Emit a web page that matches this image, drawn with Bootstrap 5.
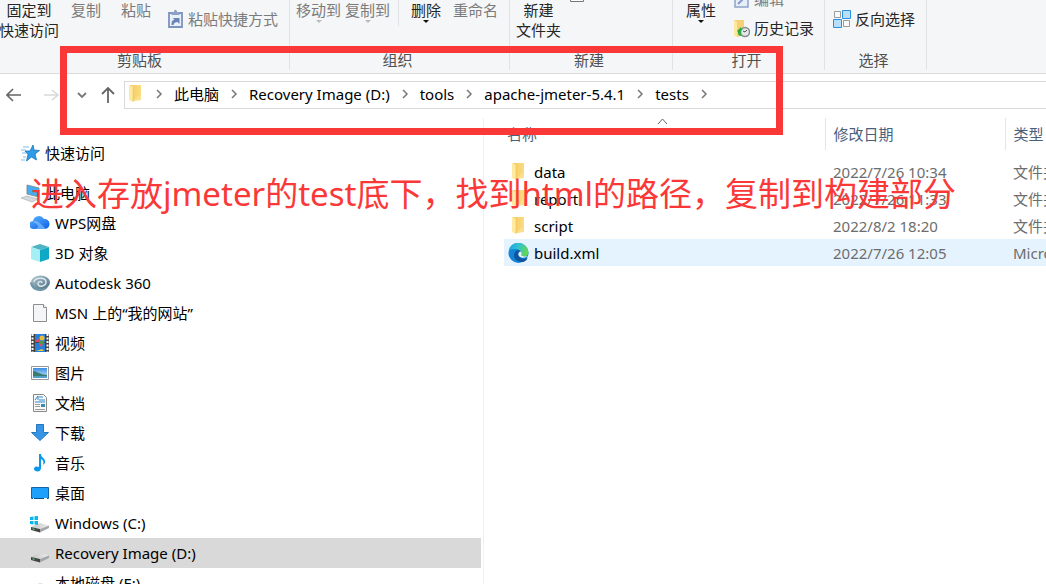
<!DOCTYPE html>
<html lang="zh-CN">
<head>
<meta charset="utf-8">
<meta name="viewport" content="width=device-width, initial-scale=1">
<title>tests</title>
<link href="https://cdn.jsdelivr.net/npm/bootstrap@5.3.0/dist/css/bootstrap.min.css" rel="stylesheet">
<style>
body{font:15px/20px "Noto Sans","Noto Sans CJK SC",sans-serif;color:#000;background:#fff}
.explorer{height:100vh}
a{color:inherit;text-decoration:none}
.ribbon{background:#f5f6f7;border-bottom:1px solid #dadbdc;color:#262626;height:74px}
.ribbon-group{border-right:1px solid #e1e2e3;height:70px}
.tools{height:50px}
.caption-text{color:#505050}
.tool{background:none;border:0;padding:0;color:inherit;line-height:20px;white-space:nowrap}
.tool:disabled{color:#7b7b7b}
.tool svg{display:block}
.g-clip{width:290px;padding-right:10px}
.g-org{width:220px;padding-right:4px}
.g-new{width:163px;padding-right:4px}
.g-open{width:152px;padding-right:4px}
.g-sel{width:102px;padding-right:4px}
.clip-tools{gap:20px}
.clip-tools .pin{width:60px;margin-right:-8px;margin-left:-1px}
.paste-link{margin-top:9px;margin-left:-4px}
.org-tools{padding-left:6px;gap:4px}
.new-tools{padding-left:6px;gap:8px}
.divider{width:1px;height:26px;background:#e1e2e3}
.open-tools{padding-left:13px;gap:18px}
.stack{margin-top:-11px;gap:9px}
.stack-up{margin-top:-21px;gap:10px}
.addressbar{height:28px;margin:7px 0 9px}
.nav-tools{width:124px;padding-left:6px;padding-right:9px}
.crumbs{border:1px solid #d9d9d9;border-right:0;gap:11px;padding:0 0 2px 3px}
.sidebar{width:484px;flex:none;border-right:1px solid #f0f0f0;padding-top:20px}
.sidebar a{height:30px;flex:none;padding-left:30px;gap:5px;margin-right:2px}
.sidebar a.root{padding-left:20px}
.sidebar a.quick{margin-bottom:10px}
.sidebar a.active{background:#d9d9d9}
.files{table-layout:fixed;width:721px;margin-left:20px;border-collapse:collapse;flex:none}
.files th{height:32px;font-weight:400;color:#4c607a;border-right:1px solid #e5e5e5;padding:0 8px}
.files th:first-child{padding-left:3px}
.files tbody::before{content:"";display:block;height:8px}
.files td{height:27px;padding:0 8px;color:#6d6d6d;white-space:nowrap}
.files td:first-child{padding:0 4px}
.files td a{color:#000;gap:5px}
.files tr.hover td{background:#e5f3ff}
.sorted{left:153px;top:0}
.mark-box{left:60px;top:46px;width:723px;height:89px;border:7px solid #fb3838;pointer-events:none}
.mark-text{left:31px;top:170px;font-size:33px;line-height:48px;color:#fb3838;white-space:nowrap;pointer-events:none}
</style>
</head>
<body>
<svg width="0" height="0" class="position-absolute" aria-hidden="true">
<defs>
<linearGradient id="fold" x2="1"><stop stop-color="#f3cb64"/><stop offset="1" stop-color="#fbdc80"/></linearGradient>
<linearGradient id="edgeA" x1="0" y1="0" x2="1" y2=".3"><stop stop-color="#1b9de2"/><stop offset=".5" stop-color="#2fc3d2"/><stop offset="1" stop-color="#63d45a"/></linearGradient>
<linearGradient id="cloud" x2=".8" y2="1"><stop stop-color="#5cb5ff"/><stop offset="1" stop-color="#1264e8"/></linearGradient>
<linearGradient id="sky" x2="0" y2="1"><stop stop-color="#3b8be0"/><stop offset="1" stop-color="#d4edfb"/></linearGradient>
<linearGradient id="disk" x2="1"><stop stop-color="#c4c4c4"/><stop offset="1" stop-color="#ececec"/></linearGradient>
<linearGradient id="swirl" x2="1" y2="1"><stop stop-color="#b5cad5"/><stop offset="1" stop-color="#496c80"/></linearGradient>
</defs>
<symbol id="folder" viewBox="0 0 20 20"><path d="M5 1h11v15l-8 1z" fill="url(#fold)"/><path d="M13 12l3-1v5H9z" fill="#fae08c"/><path d="M4 1l4 2v15l-4-2z" fill="#ffeaa2"/><path d="M8 3v15" stroke="#edc35d" stroke-width=".6"/></symbol>
<symbol id="chev" viewBox="0 0 8 10"><path d="M2 1l4 4-4 4" fill="none" stroke="#777" stroke-width="1.5"/></symbol>
<symbol id="diskbox" viewBox="0 0 20 20"><path d="M1 14l9-4 9 2.500-9 3.500z" fill="url(#disk)"/><path d="M1 14l9 2v3.500L1 17z" fill="#424645"/><path d="M10 16l9-3.500V15l-9 4.500z" fill="#a4a7a7"/><path d="M2.500 15.800l2 .6" stroke="#60e38a"/></symbol>
</svg>

<div class="explorer d-flex flex-column overflow-hidden position-relative">
<header class="ribbon d-flex flex-shrink-0 overflow-hidden">
 <section class="ribbon-group flex-shrink-0 g-clip">
  <div class="tools d-flex align-items-start clip-tools">
   <button class="tool pin">固定到<br>快速访问</button>
   <button class="tool" disabled>复制</button>
   <button class="tool" disabled>粘贴</button>
   <button class="tool paste-link d-flex gap-1" disabled><svg width="17" height="20" viewBox="0 0 16 20"><path d="M1.500 4h13v14h-13z" fill="#e9f0fa" stroke="#7d92bd" stroke-width="1.800"/><path d="M4 3h2.500c0-3 3-3 3 0H12v3H4z" fill="#8da1c8"/><path d="M4 16c0-4 1-5 3-5L5.500 9H12v6l-2-2c-2 0-4 1-4 3z" fill="#6883b6"/></svg>粘贴快捷方式</button>
  </div>
  <div class="caption-text text-center">剪贴板</div>
 </section>
 <section class="ribbon-group flex-shrink-0 g-org">
  <div class="tools org-tools d-flex align-items-start">
   <button class="tool" disabled>移动到<svg class="mx-auto" width="8" height="4"><path d="M1 0h6L4 3z" fill="#bbb"/></svg></button>
   <button class="tool" disabled>复制到<svg class="mx-auto" width="8" height="4"><path d="M1 0h6L4 3z" fill="#bbb"/></svg></button>
   <span class="divider ms-1"></span>
   <button class="tool ms-2">删除<svg class="mx-auto" width="8" height="4"><path d="M1 0h6L4 3z" fill="#111"/></svg></button>
   <button class="tool ms-2" disabled>重命名</button>
  </div>
  <div class="caption-text text-center">组织</div>
 </section>
 <section class="ribbon-group flex-shrink-0 g-new">
  <div class="tools new-tools d-flex align-items-start">
   <button class="tool">新建<br>文件夹</button>
   <svg width="18" height="3"><path d="M1.500-3v4.500h13V-3" fill="#fff" stroke="#777"/></svg>
  </div>
  <div class="caption-text text-center">新建</div>
 </section>
 <section class="ribbon-group flex-shrink-0 g-open">
  <div class="tools open-tools d-flex align-items-start">
   <button class="tool">属性<svg class="mx-auto" width="8" height="4"><path d="M1 0h6L4 3z" fill="#111"/></svg></button>
   <div class="stack d-flex flex-column align-items-start">
    <button class="tool d-flex gap-1" disabled><svg width="16" height="20"><path d="M1 5h13v13H1z" fill="#e7eefa" stroke="#8fa3cb" stroke-width="1.500"/><path d="M4 15l8-8" stroke="#879dc8" stroke-width="2"/></svg>编辑</button>
    <button class="tool d-flex gap-1"><svg width="16" height="20" viewBox="0 0 16 20"><path d="M0 2h10v12l-6 5-4-2z" fill="#f6d173"/><path d="M0 2l3 2v15l-3-2z" fill="#ffe9a1"/><circle cx="11" cy="14" r="4.500" fill="#e4e7e8" stroke="#858b8e" stroke-width="1.500"/><path d="M11 14l2-2M11 14l-2-1" stroke="#555"/><path d="M3 13l4-4v2h2c-3 2-3 4-1 7-3 0-4-1-4-4z" fill="#26ad3b"/></svg>历史记录</button>
   </div>
  </div>
  <div class="caption-text text-center">打开</div>
 </section>
 <section class="ribbon-group flex-shrink-0 g-sel">
  <div class="tools d-flex align-items-start ps-2">
   <div class="stack-up d-flex flex-column align-items-start">
    <button class="tool d-flex gap-1" aria-label="全部取消"><svg width="18" height="20"><path d="M2 14h6v7H2zM11 14h6v7h-6z" fill="#fff" stroke="#a0a0a0"/></svg></button>
    <button class="tool d-flex gap-1"><svg width="18" height="20"><path d="M1.500 2.500h6v6h-6zM10.500 11.500h6v6h-6z" fill="#fafafa" stroke="#9b9b9b"/><path d="M9.500 1.500h8v8h-8zM.5 10.500h8v8h-8z" fill="#b8dffa" stroke="#2890df"/></svg>反向选择</button>
   </div>
  </div>
  <div class="caption-text text-center">选择</div>
 </section>
</header>

<div class="addressbar d-flex flex-shrink-0">
 <div class="nav-tools d-flex align-items-center justify-content-between">
  <button class="tool" aria-label="后退"><svg width="16" height="14"><path d="M15 7H1M7 1L1 7l6 6" fill="none" stroke="#666" stroke-width="1.600"/></svg></button>
  <button class="tool ms-2" disabled aria-label="前进"><svg width="16" height="14"><path d="M0 7h14M8 2l6 5-6 5" fill="none" stroke="#d9d9d9" stroke-width="1.600"/></svg></button>
  <button class="tool ms-1" aria-label="最近的位置"><svg width="10" height="8"><path d="M1 2l4 4 4-4" fill="none" stroke="#777" stroke-width="1.800"/></svg></button>
  <button class="tool" aria-label="上移"><svg width="14" height="16"><path d="M7 16V1M1 7l6-6 6 6" fill="none" stroke="#666" stroke-width="1.800"/></svg></button>
 </div>
 <nav class="crumbs d-flex flex-grow-1 align-items-center text-nowrap" aria-label="路径">
  <svg width="16" height="20" viewBox="3 0 16 20"><use href="#folder" width="20" height="20"/></svg>
  <svg width="8" height="10"><use href="#chev"/></svg><a href="#">此电脑</a>
  <svg width="8" height="10"><use href="#chev"/></svg><a href="#">Recovery Image (D:)</a>
  <svg width="8" height="10"><use href="#chev"/></svg><a href="#">tools</a>
  <svg width="8" height="10"><use href="#chev"/></svg><a href="#">apache-jmeter-5.4.1</a>
  <svg width="8" height="10"><use href="#chev"/></svg><a href="#">tests</a>
  <svg width="8" height="10"><use href="#chev"/></svg>
 </nav>
</div>

<main class="d-flex flex-grow-1 overflow-hidden">
 <nav class="sidebar d-flex flex-column overflow-hidden" aria-label="导航窗格">
  <a href="#" class="root quick d-flex align-items-center"><svg width="20" height="20"><path d="M13 2l1 5 5.500.5L15 11l1.500 6-5-3-5 4L8 11.500 5 8h5z" fill="#2e9be8" stroke="#1673b8" stroke-width=".8"/><path d="M3 4h6M1 7h5M2 10h4M3 14h3M1 17h4" stroke="#79bde9"/></svg>快速访问</a>
  <a href="#" class="root d-flex align-items-center"><svg width="20" height="20"><path d="M7 2l12 3v9L7 11z" fill="#45aef2" stroke="#7f909c"/><path d="M1 15l6-2 11 3-6 3z" fill="#d4d9dd" stroke="#a3abb1" stroke-width=".6"/></svg>此电脑</a>
  <a href="#" class="d-flex align-items-center"><svg width="20" height="20"><path d="M4 16a4 4 0 01-1-8 6 6 0 0111-2 5 5 0 011 10z" fill="url(#cloud)"/><path d="M2 9c5-3 8 1 14 7H5c5-1 4-5-3-7z" fill="#86c5ff" opacity=".65"/></svg>WPS网盘</a>
  <a href="#" class="d-flex align-items-center"><svg width="20" height="20"><path d="M1 4l9-3 9 3-9 3z" fill="#4fb3c4"/><path d="M1 4l9 3v12l-9-3z" fill="#a4eff3"/><path d="M19 4l-9 3v12l9-3z" fill="#10a9c5"/></svg>3D 对象</a>
  <a href="#" class="d-flex align-items-center"><svg width="20" height="20"><ellipse cx="10.500" cy="9.500" rx="9.500" ry="7" fill="url(#swirl)"/><path d="M0 9c0 5 4 9 10 9 4 0 7-2 8-4-6 3-14 2-16-4z" fill="#6f95a8"/><path d="M4 9c1-5 12-5 12 0 0 4-7 6-8 2 0-3 4-3 4-1" fill="none" stroke="#dce7ec" stroke-width="1.500"/></svg>Autodesk 360</a>
  <a href="#" class="d-flex align-items-center"><svg width="20" height="20"><path d="M3.500 1.500h10l3 3v14h-13z" fill="#f4f5f6" stroke="#8e8e8e"/><path d="M13.500 1.500v3h3" fill="#fff" stroke="#8e8e8e"/></svg>MSN 上的“我的网站”</a>
  <a href="#" class="d-flex align-items-center"><svg width="20" height="20"><path d="M1 1h18v18H1z" fill="#444"/><path d="M5 1h10v8H5zM5 10h10v9H5z" fill="#247fdd"/><path d="M2.500 1v18M17.500 1v18" stroke="#fff" stroke-width="2" stroke-dasharray="2 1.500"/><path d="M5 9l3-4 2 4z" fill="#e44b61"/><circle cx="12" cy="5" r="2.500" fill="#e8be32"/><path d="M9 8h5v2l-2 2-3-1z" fill="#4c9b40"/><circle cx="11" cy="12" r="1.500" fill="#e44b61"/><path d="M6 18h8l-2-2z" fill="#efc73b"/></svg>视频</a>
  <a href="#" class="d-flex align-items-center"><svg width="20" height="20"><path d="M1.500 3.500h17v13h-17z" fill="#fff" stroke="#999"/><path d="M3 5h14v10H3z" fill="url(#sky)"/><path d="M3 8c4 0 5 3 14 4v3H3z" fill="#397d70"/><path d="M3 13h14v2H3z" fill="#539ec7"/></svg>图片</a>
  <a href="#" class="d-flex align-items-center"><svg width="20" height="20"><path d="M3.500 1.500h10l3 3v14h-13z" fill="#f9f9f9" stroke="#898989"/><path d="M5 7l3-4v4M9 4h4M9 7h6M5 9h10" fill="none" stroke="#2a87cb"/><path d="M5 11.500h5M5 13.500h5M5 16.500h10" stroke="#9a9a9a"/><path d="M11 11h4v3h-4z" fill="#358caf"/></svg>文档</a>
  <a href="#" class="d-flex align-items-center"><svg width="20" height="20"><path d="M6.500 1.500h7v8h5L10 17.500 1.500 9.500h5z" fill="#3795e8" stroke="#2678be"/></svg>下载</a>
  <a href="#" class="d-flex align-items-center"><svg width="20" height="20"><path d="M9 1h2c0 4 5 4 4 9l-2 2c1-4 0-5-2-6v9c0 5-7 4-7 1s3-3 5-2z" fill="#0a98ed"/></svg>音乐</a>
  <a href="#" class="d-flex align-items-center"><svg width="20" height="20"><path d="M1.500 4.500h17v11h-17z" fill="#1ca0fb" stroke="#1265a4"/><path d="M2 15.500h16" stroke="#07528c"/><path d="M3 15.500h1M14 15.500h3" stroke="#fff"/></svg>桌面</a>
  <a href="#" class="d-flex align-items-center"><svg width="20" height="20"><use href="#diskbox"/><path d="M0 4l3.500-.5V7H0zM4.500 3.300L8 3v4H4.500zM0 8h3.500v3.500L0 11zM4.500 8H8v4l-3.500-.4z" fill="#08b5ef"/></svg>Windows (C:)</a>
  <a href="#" class="active d-flex align-items-center"><svg width="20" height="20"><use href="#diskbox"/></svg>Recovery Image (D:)</a>
  <a href="#" class="d-flex align-items-center"><svg width="20" height="20"><use href="#diskbox"/></svg>本地磁盘 (E:)</a>
 </nav>
 <div class="flex-grow-1 overflow-hidden">
  <table class="files">
   <colgroup><col style="width:321px"><col style="width:180px"><col style="width:220px"></colgroup>
   <thead><tr><th class="position-relative" scope="col">名称<svg class="sorted position-absolute" width="12" height="7"><path d="M1 6l4.500-5L10 6" fill="none" stroke="#666"/></svg></th><th scope="col">修改日期</th><th scope="col">类型</th></tr></thead>
   <tbody>
    <tr><td><a href="#" class="d-flex align-items-center"><svg width="21" height="20"><use href="#folder" width="20" height="20"/></svg>data</a></td><td>2022/7/26 10:34</td><td>文件夹</td></tr>
    <tr><td><a href="#" class="d-flex align-items-center"><svg width="21" height="20"><use href="#folder" width="20" height="20"/></svg>report</a></td><td>2022/7/26 11:33</td><td>文件夹</td></tr>
    <tr><td><a href="#" class="d-flex align-items-center"><svg width="21" height="20"><use href="#folder" width="20" height="20"/></svg>script</a></td><td>2022/8/2 18:20</td><td>文件夹</td></tr>
    <tr class="hover"><td><a href="#" class="d-flex align-items-center"><svg width="21" height="20" viewBox="0 0 21 20"><circle cx="10.500" cy="10" r="10" fill="#1484d6"/><path d="M.8 8C2-3 19-3 20.500 9c0 5-5 6-8 4 2-3 0-7-5-7-4 0-6 1-6.700 2z" fill="url(#edgeA)"/><path d="M7 9c-3 5 1 10 8 10 2-.5 4-2 4.500-4-5 2-9 0-9-4 0-2 1-3 2-3-2-1-4-1-5.500 1z" fill="#0f569f"/><path d="M12.500 8.500c-3 1-3 5 1 6 2 .6 5 0 6.500-1.500-3 1-6 .5-7-1 1-1 .8-2.500-.5-3.500z" fill="#e5f3ff"/></svg>build.xml</a></td><td>2022/7/26 12:05</td><td>Microsoft Edge</td></tr>
   </tbody>
  </table>
 </div>
</main>
<div class="mark-box position-absolute"></div>
<div class="mark-text position-absolute">进入存放jmeter的test底下，找到html的路径，复制到构建部分</div>
</div>
<script src="https://cdn.jsdelivr.net/npm/bootstrap@5.3.0/dist/js/bootstrap.bundle.min.js"></script>
</body>
</html>
